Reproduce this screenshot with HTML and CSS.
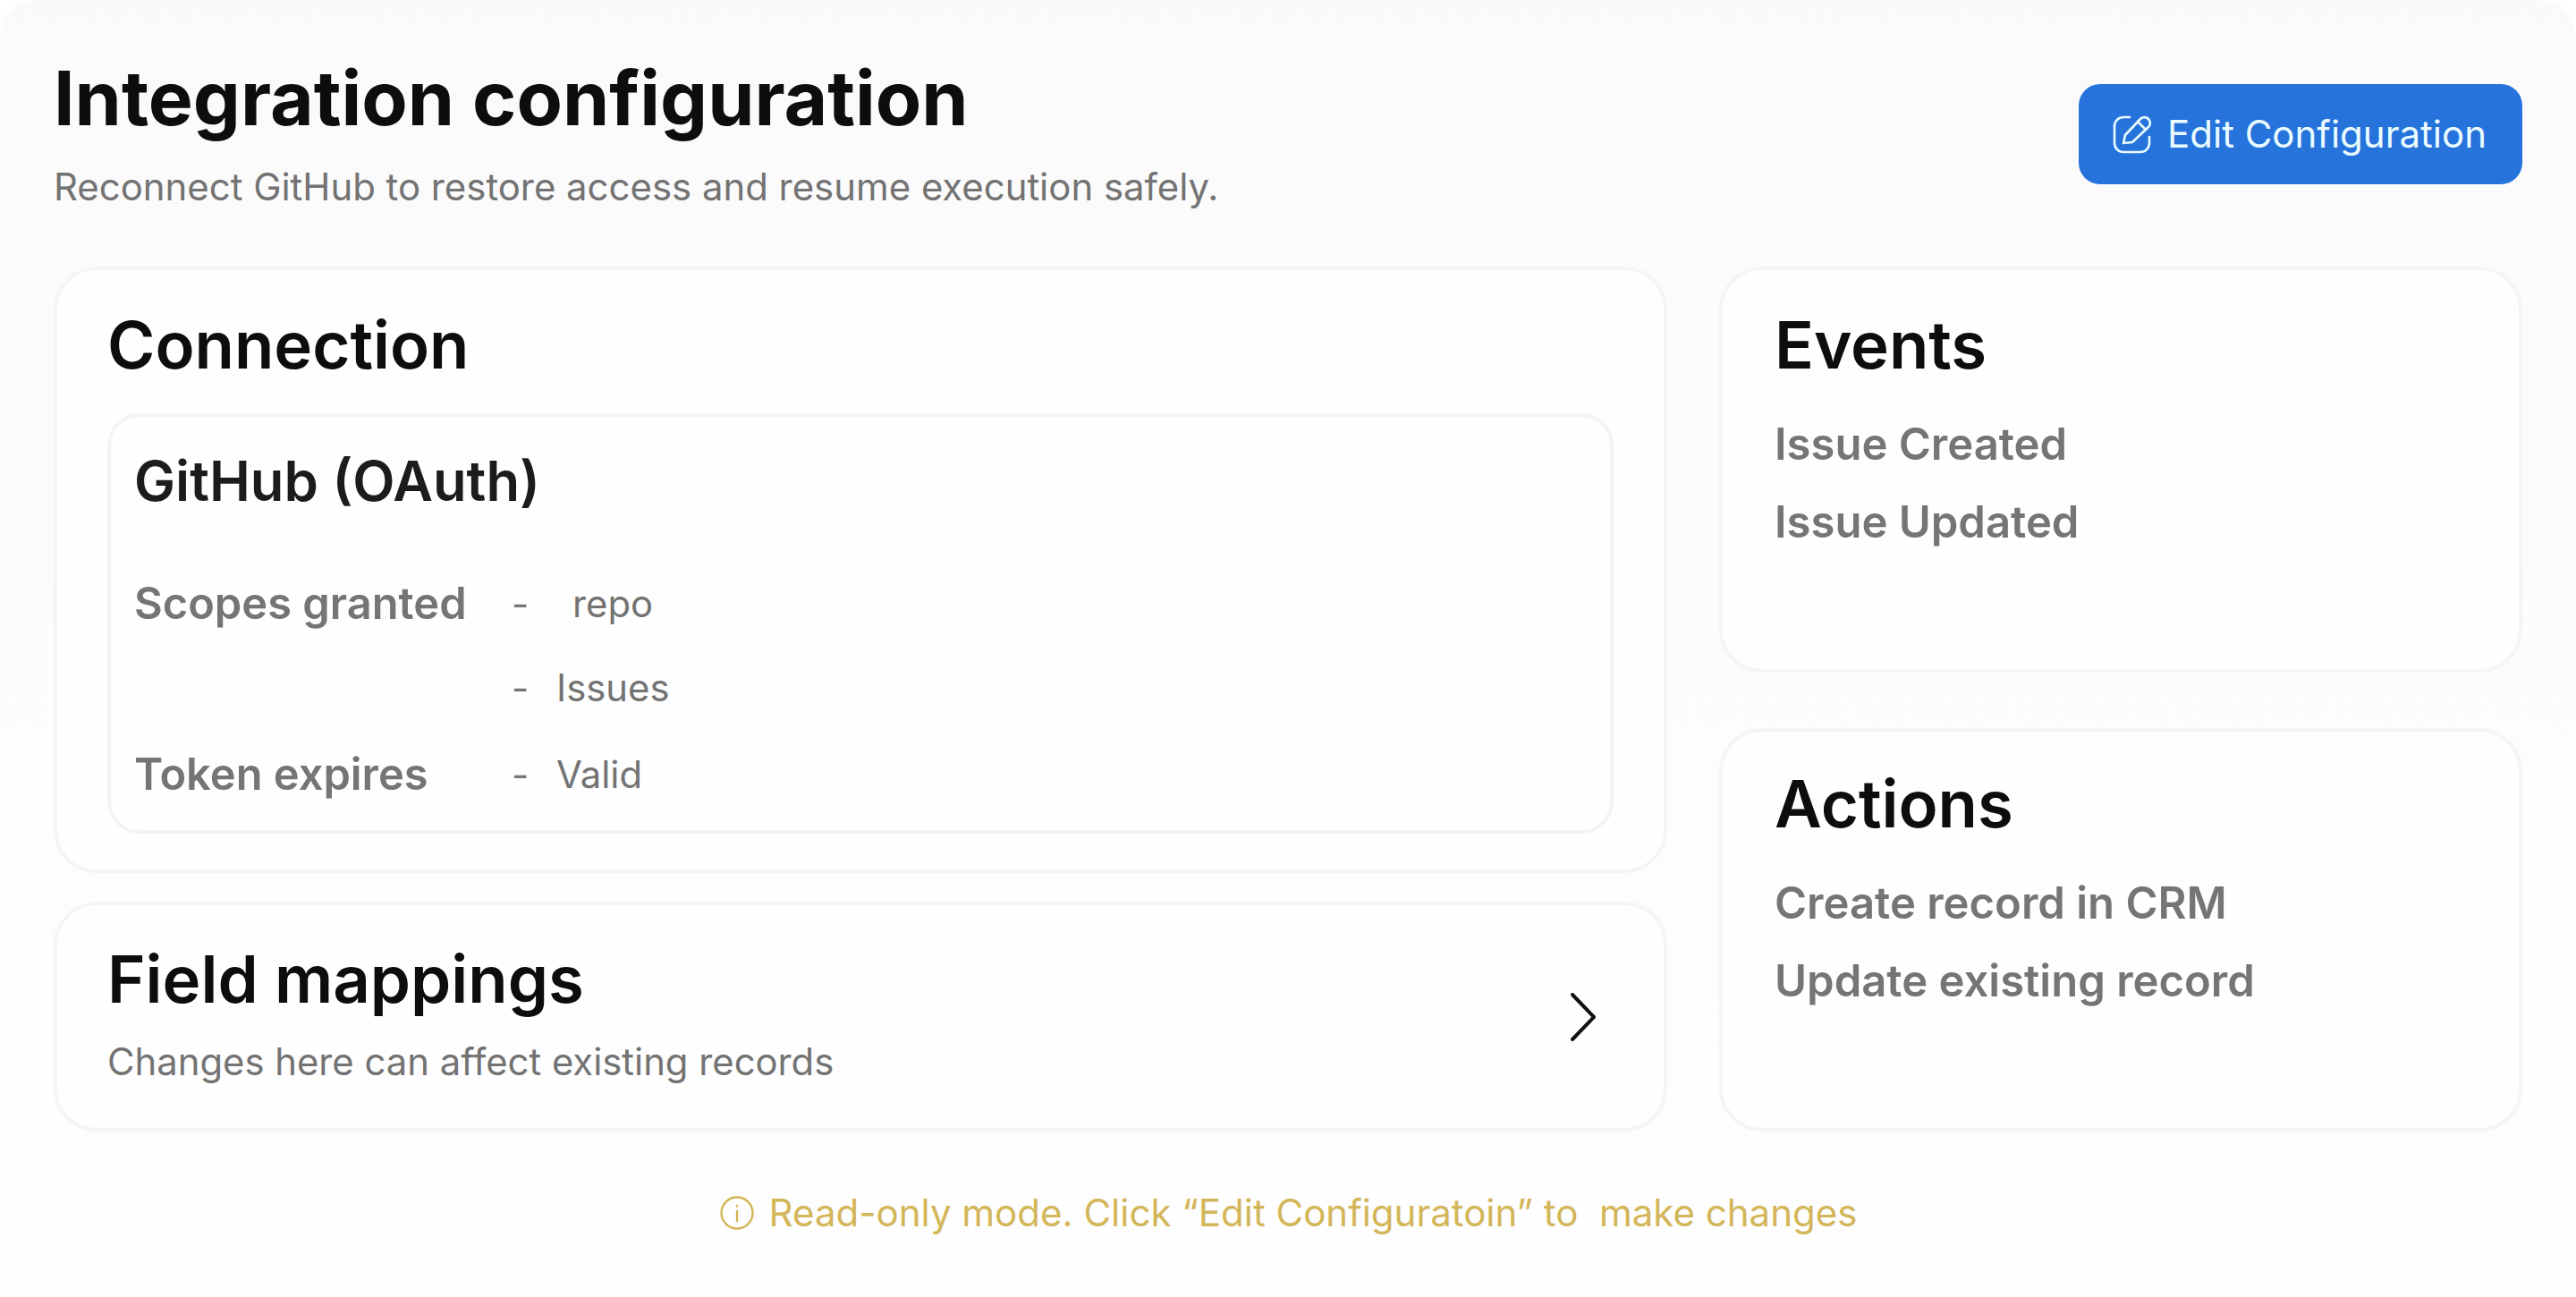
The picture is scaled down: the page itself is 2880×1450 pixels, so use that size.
FILE: index.html
```html
<!DOCTYPE html>
<html lang="en">
<head>
<meta charset="utf-8">
<title>Integration configuration</title>
<link rel="stylesheet" href="styles.css">
</head>
<body>
<main class="page">
  <header class="header">
    <div class="header-text">
      <h1 class="title">Integration configuration</h1>
      <p class="subtitle">Reconnect GitHub to restore access and resume execution safely.</p>
    </div>
    <button class="edit-btn" type="button">
      <svg class="edit-icon" viewBox="0 0 44 44" fill="none" stroke="currentColor" stroke-width="2.6" stroke-linecap="round" stroke-linejoin="round">
        <path d="M19 3H12A10 10 0 0 0 2 13V32A10 10 0 0 0 12 42H31A10 10 0 0 0 41 32V25"/>
        <path d="M12 32L14 23L31 5A5.500 5.500 0 0 1 40 14L22 31Z"/>
        <path d="M28 8L37 17"/>
      </svg>
      <span>Edit Configuration</span>
    </button>
  </header>
  <div class="columns">
    <div class="col-main">
      <section class="card connection">
        <h2 class="card-title">Connection</h2>
        <div class="inner">
          <h3 class="inner-title">GitHub (OAuth)</h3>
          <div class="rows">
            <div class="row row-scope">
              <span class="label">Scopes granted</span><span class="dash">-</span><span class="value value-repo">repo</span>
            </div>
            <div class="row row-issues">
              <span class="label"></span><span class="dash">-</span><span class="value">Issues</span>
            </div>
            <div class="row row-token">
              <span class="label">Token expires</span><span class="dash">-</span><span class="value">Valid</span>
            </div>
          </div>
        </div>
      </section>
      <section class="card mappings">
        <div class="mappings-text">
          <h2 class="card-title">Field mappings</h2>
          <p class="mappings-note">Changes here can affect existing records</p>
        </div>
        <svg class="chevron" viewBox="0 0 28 54" fill="none" stroke="#111" stroke-width="4" stroke-linecap="round" stroke-linejoin="round">
          <path d="M2 2L26 27L2 52"/>
        </svg>
      </section>
    </div>
    <div class="col-side">
      <section class="card side-card">
        <h2 class="card-title">Events</h2>
        <ul class="side-list">
          <li>Issue Created</li>
          <li>Issue Updated</li>
        </ul>
      </section>
      <section class="card side-card actions">
        <h2 class="card-title">Actions</h2>
        <ul class="side-list">
          <li>Create record in CRM</li>
          <li>Update existing record</li>
        </ul>
      </section>
    </div>
  </div>
  <footer class="notice">
    <svg class="notice-icon" viewBox="0 0 40 40" fill="none" stroke="currentColor" stroke-width="2.4" stroke-linecap="round">
      <circle cx="20" cy="20" r="17.500"/>
      <path d="M20 18V29"/>
      <path d="M20 12V12.500"/>
    </svg>
    <span>Read-only mode. Click “Edit Configuratoin” to&nbsp; make changes</span>
  </footer>
</main>
</body>
</html>
```

FILE: styles.css
```css
* { box-sizing: border-box; }
html, body { margin: 0; padding: 0; background: #fff; }
body { width: 2880px; height: 1450px; overflow: hidden; font-family: Inter, "Liberation Sans", sans-serif; }
.page {
  width: 2880px; height: 1450px; padding: 60px 60px 0;
  background: linear-gradient(180deg, #fafafa 0, #fbfbfb 300px, #fdfdfd 1000px, #fefefe 100%);
  border-top-left-radius: 40px; border-top-right-radius: 40px;
}
.header { display: flex; justify-content: space-between; align-items: flex-start; height: 238px; }
.title { margin: 0; font-size: 84px; line-height: 100px; font-weight: 700; color: #0d0d0d; }
.subtitle { margin: 24px 0 0; font-size: 41.900px; line-height: 50px; font-weight: 400; color: #737373; }
.edit-btn {
  display: flex; align-items: center; gap: 17px; margin-top: 34px;
  width: 496px; height: 112px; padding: 0 38px;
  background: #2673dc; color: #eafcff; border: 0; border-radius: 24px;
  font: 400 42px/48px Inter, "Liberation Sans", sans-serif;
}
.edit-icon { width: 44px; height: 44px; flex: none; }
.columns { display: flex; gap: 58px; height: 967px; }
.col-main { width: 1804px; display: flex; flex-direction: column; gap: 32px; }
.col-side { width: 898px; display: flex; flex-direction: column; gap: 62px; }
.card { background: #fefefe; border: 4px solid #f5f5f5; border-radius: 48px; }
.connection { height: 678px; padding: 42px 56px; }
.card-title { margin: 0; font-size: 72.500px; line-height: 84px; font-weight: 600; color: #0d0d0d; }
.inner { margin-top: 34px; height: 470px; border: 4px solid #f4f4f4; border-radius: 36px; padding: 36px 26px; }
.inner-title { margin: 0; font-size: 61.500px; line-height: 72px; font-weight: 600; color: #1c1c1c; }
.rows { margin-top: 71px; }
.row { display: flex; align-items: center; height: 60px; }
.row-issues { margin-top: 34px; }
.row-token { margin-top: 37px; }
.label { width: 422px; font-size: 48.800px; line-height: 60px; font-weight: 600; color: #757575; }
.dash { width: 50px; font-size: 41.800px; color: #757575; }
.value { font-size: 41.800px; color: #737373; }
.value-repo { margin-left: 18px; }
.mappings { flex: 1; display: flex; justify-content: space-between; align-items: center; padding: 0 76px 0 56px; }
.mappings-text { align-self: flex-start; padding-top: 41px; }
.mappings-note { margin: 25px 0 0; font-size: 41.800px; line-height: 50px; color: #737373; }
.chevron { width: 28px; height: 54px; flex: none; }
.side-card { flex: 1; padding: 42px 58px; }
.side-list { list-style: none; margin: 39px 0 0; padding: 0; }
.side-list li { font-size: 49px; line-height: 60px; font-weight: 600; color: #757575; }
.side-list li + li { margin-top: 27px; }
.actions { padding-top: 39px; }
.notice { display: flex; justify-content: center; align-items: center; gap: 16px; margin-top: 66px; font-size: 42px; line-height: 50px; color: #d3b659; }
.notice-icon { width: 40px; height: 40px; flex: none; }
```
